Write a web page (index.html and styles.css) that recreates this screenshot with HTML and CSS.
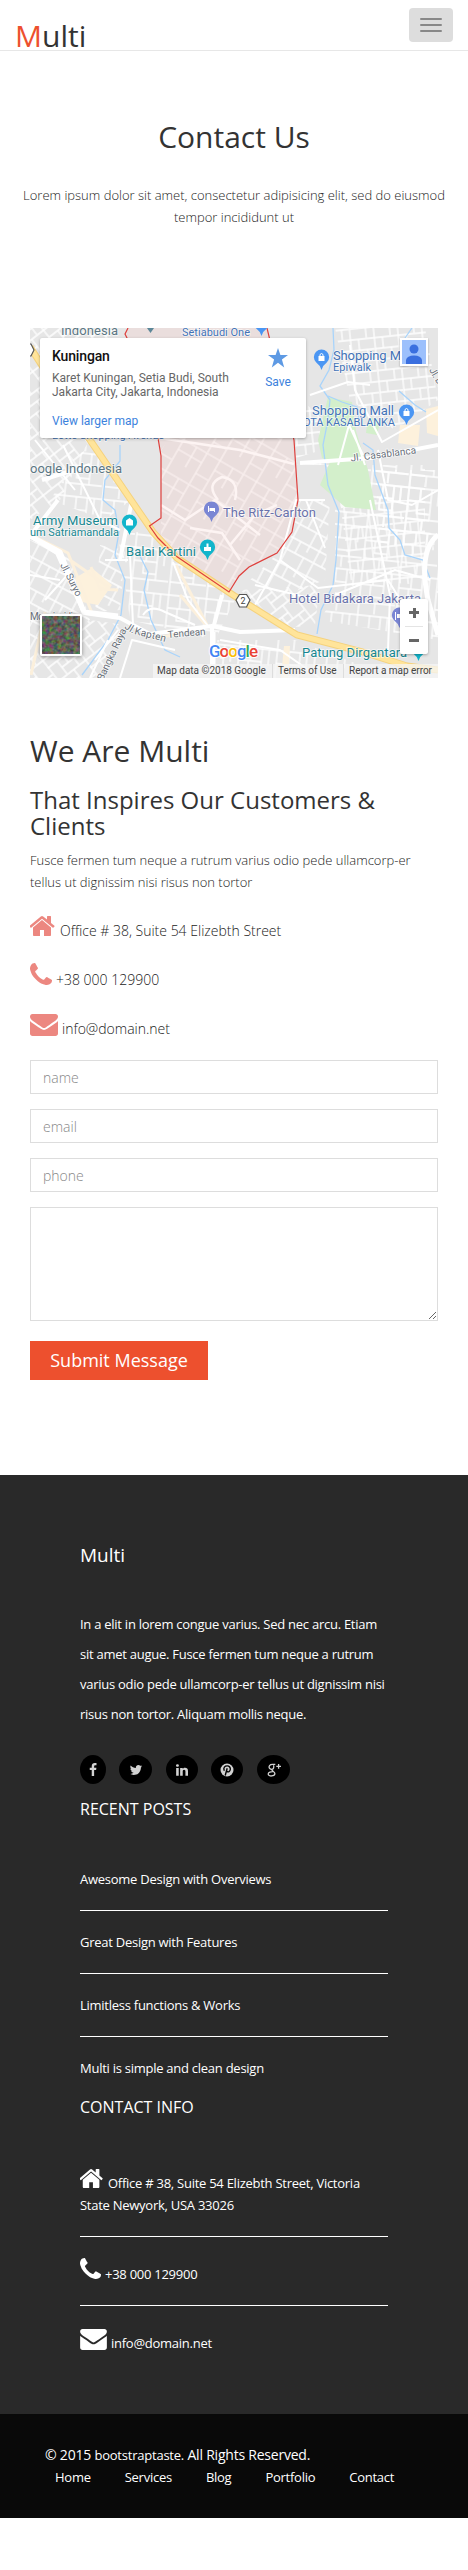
FILE: index.html
```html
<!DOCTYPE html>
<html lang="en">
<head>
<meta charset="utf-8">
<title>Multi - Contact Us</title>
<link rel="stylesheet" href="styles.css">
</head>
<body>
<svg class="sprite" aria-hidden="true">
  <symbol id="home" viewBox="64 253 1664 1283" preserveAspectRatio="none"><path d="M1408 992v480q0 26-19 45t-45 19h-384v-384h-256v384h-384q-26 0-45-19t-19-45v-480q0-1 .5-3t.5-3l575-474 575 474q1 2 1 6zm223-69l-62 74q-8 9-21 11h-3q-13 0-21-7l-692-577-692 577q-12 8-24 7-13-2-21-11l-62-74q-8-10-7-23.5t11-21.5l719-599q32-26 76-26t76 26l244 204v-195q0-14 9-23t23-9h192q14 0 23 9t9 23v408l219 182q10 8 11 21.5t-7 23.5z"/></symbol>
  <symbol id="phone" viewBox="192 128 1408 1408"><path d="M1600 1240q0 27-10 70.5t-21 68.5q-21 50-122 106-94 51-186 51-27 0-53-3.5t-57.5-12.5-47-14.5-55.5-20.5-49-18q-98-35-175-83-127-79-264-216t-216-264q-48-77-83-175-3-9-18-49t-20.5-55.5-14.5-47-12.5-57.5-3.5-53q0-92 51-186 56-101 106-122 25-11 68.5-21t70.5-10q14 0 21 3 18 6 53 76 11 19 30 54t35 63.5 31 53.5q3 4 17.5 25t21.5 35.5 7 28.5q0 20-28.5 50t-62 55-62 53-28.5 46q0 9 5 22.5t8.5 20.5 14 24 11.5 19q76 137 174 235t235 174q2 1 19 11.5t24 14 20.5 8.5 22.5 5q18 0 46-28.5t53-62 55-62 50-28.5q14 0 28.5 7t35.5 21.5 25 17.5q25 15 53.5 31t63.5 35 54 30q70 35 76 53 3 7 3 21z"/></symbol>
  <symbol id="mail" viewBox="0 256 1792 1408"><path d="M1792 710v794q0 66-47 113t-113 47h-1472q-66 0-113-47t-47-113v-794q44 49 101 87 362 246 497 345 57 42 92.5 65.5t94.5 48 110 24.5h2q51 0 110-24.5t94.5-48 92.5-65.5q170-123 498-345 57-39 100-87zm0-294q0 79-49 151t-122 123q-376 261-468 325-10 7-42.5 31t-54 38.5-52 32.5-57.5 27-50 9h-2q-23 0-50-9t-57.5-27-52-32.5-54-38.5-42.5-31q-91-64-262-182.5t-205-142.5q-62-42-117-115.5t-55-136.5q0-78 41.5-130t118.5-52h1472q65 0 112.5 47t47.5 113z"/></symbol>
  <symbol id="pin" viewBox="-8 -8 16 22"><path d="M0 12Q-1 8-5 5A7.300 7.300 0 1 1 5 5Q1 8 0 12z"/></symbol>
</svg>

<header class="topbar">
  <a class="logo"><span class="logo-first">M</span>ulti</a>
  <button class="toggle" type="button" aria-label="Menu"><i class="bar"></i><i class="bar"></i><i class="bar"></i></button>
</header>

<section class="intro">
  <h2 class="title">Contact Us</h2>
  <p class="lead">Lorem ipsum dolor sit amet, consectetur adipisicing elit, sed do eiusmod tempor incididunt ut</p>
</section>

<main class="main">
  <div class="map">
    <svg class="map-canvas" viewBox="30 328 408 350">
      <defs>
        <pattern id="g1" width="34" height="26" patternUnits="userSpaceOnUse" patternTransform="rotate(-38)"><path d="M0 1H34M1 0V26M0 10H20M12 10V26M20 1V18H34M12 18H20M27 18V26" class="street"/></pattern>
        <pattern id="g2" width="38" height="44" patternUnits="userSpaceOnUse" patternTransform="rotate(6)"><path d="M0 2H38M2 0V44M2 15H25M14 2V15M25 2V33H38M2 33H25M12 15V27H25M32 2V18M18 33V44" class="street"/></pattern>
        <pattern id="g3" width="30" height="28" patternUnits="userSpaceOnUse" patternTransform="rotate(28)"><path d="M0 1H30M1 0V28M10 1V14H30M1 14H10M20 14V28M20 1V8" class="street"/></pattern>
        <pattern id="g4" width="24" height="22" patternUnits="userSpaceOnUse" patternTransform="rotate(-6)"><path d="M0 1H24M1 0V22M9 1V12H24M1 12H9M17 12V22" class="street"/></pattern>
        <pattern id="g5" width="42" height="36" patternUnits="userSpaceOnUse" patternTransform="rotate(30)"><path d="M0 1H42M1 0V36M1 12H28M16 1V24M28 1V36M28 24H42" class="block"/></pattern>
      </defs>
      <path class="land" d="M30 328H438V678H30z"/>
      <path fill="url(#g1)" d="M30 328H115L90 440L60 500L30 520z"/>
      <path fill="url(#g2)" d="M90 440L131 500L105 520L50 500zM118 535L150 530L235 600L215 640L130 620z"/>
      <path fill="url(#g3)" d="M30 540L70 555L90 620L30 650zM100 545L125 550L120 610L95 612zM300 500L330 500L325 580L285 595L250 580L275 556L292 535z"/>
      <path fill="url(#g1)" d="M90 620L125 625L105 678H30V655zM240 590L320 585L315 625L285 628z"/>
      <path fill="url(#g4)" d="M335 328H425L438 400L395 430L350 400zM340 500L425 500L425 585L350 580zM295 395L325 420L322 450L296 458z"/>
      <path fill="url(#g2)" d="M296 465L325 460L335 500L335 595L320 620L438 640V570L425 500V465L330 465z"/>
      <path fill="url(#g2)" d="M215 640L295 640L360 665L300 678H225zM375 470H438V545H380z"/>
      <path class="cream" d="M75 578L92 568L112 585L98 605L82 602zM400 425L420 425L418 446L398 443zM426 409L438 406V436L427 433zM284 646L290 646L288 678H281z"/>
      <path class="cream-road" d="M31 535L68 553L92 613M70 560L110 588M91 567L100 589L118 590M180 595L205 624M31 675L45 612M155 638L180 634M176 565L207 625"/>
      <path class="green" d="M328 397L352 402L356 431L368 470L376 510L345 507L320 485L330 462L322 458L318 440z"/>
      <path class="green" d="M368 416L380 422L377 435L366 433z"/>
      <path class="road r3" d="M338 465L349 425L363 455M353 430L365 465"/>
      <path class="river" d="M333 328L334 350L329 370L320 386L330 400L328 420L323 445L328 485L339 512L336 560L333 585L321 610L317 634"/>
      <path class="river" d="M120 445V461L105 480L103 500L115 510L119 532L115 555L125 580L121 615L108 640L82 675M137 550L148 572L144 590L151 620L165 650L180 657"/>
      <path class="river" d="M363 443L373 450L375 475L388 510L389 528L400 540L405 555L423 560L430 578M399 391L415 405L426 412"/>
      <path class="river" d="M328 396L342 402L357 407L359 419M412 328L405 338"/>
      <path class="zone-fill" d="M128 328L125 334L128 340L158 438L161 456V518L149.500 526L158 538L176 556L229 592L239 576L249 567L277 553L292 532L298 500L294 440L267 328z"/>
      <path fill="url(#g5)" d="M170 438H294L298 500L292 532L277 553L249 567L229 590L161 540V450z"/>
      <path class="zone-road" d="M160 438L240 450L294 464M190 528L222 533L240 560M218 500Q205 484 222 477Q240 480 235 500M161 505L185 520L215 500L260 535M230 545L255 515L277 505"/>
      <path class="road r5" d="M300 463L370 458L438 445M58 500L30 536L57 553L84 613L120 618L150 634L212 626L240 632L295 630M222 595L214 625M212 625V678M132 500L120 560M42 480L90 465"/>
      <path class="road r7" d="M438 535Q418 550 428 600L438 635M213 632V678M30 536L60 552L84 612L118 616"/>
      <path class="road r3" d="M255 605L280 560L296 500L325 500M280 560L318 588L388 580L425 640M335 595L395 570L430 580M370 500L390 595L388 650M306 500L325 548M255 585L318 600M310 395L348 382L370 385M350 345L355 390L382 442L438 410M378 450L388 500L412 505L438 490M220 640L280 650L320 678"/>
      <path class="road r3" d="M173 562L188 600L208 626M130 555L133 625M105 560L128 560M143 615Q150 604 165 612L195 625M63 445L100 520L120 530M35 440L75 490M30 575L60 580M45 600L70 572M95 660L118 630M90 678L108 640M120 678L132 640L175 650"/>
      <path class="hwy-edge" d="M30 347L90 440L131 500L153 532L177 558L233 595L297 635L363 652L407 666L438 670"/>
      <path class="hwy" d="M30 347L90 440L131 500L153 532L177 558L233 595L297 635L363 652L407 666L438 670"/>
      <path class="zone-line" d="M128 328L125 334L128 340L158 438L161 456V518L149.500 526L158 538L176 556L229 592L239 576L249 567L277 553L292 532L298 500L294 440L267 328"/>
      <g class="shield"><path d="M236 600L239.500 594.500H246.500L250 600L246.500 607H239.500z"/><path d="M23 350L27 344H31L34 350L31 356H27z"/></g>
      <text class="t-num" x="240.500" y="604">2</text>

      <g class="t-place">
        <text x="61" y="335" textLength="57">Indonesia</text>
        <text x="30" y="473" textLength="92">oogle Indonesia</text>
      </g>
      <g class="t-shop">
        <text x="182" y="336" font-size="11" textLength="68">Setiabudi One</text>
        <text x="333" y="360" font-size="13" textLength="81">Shopping Mall</text>
        <text x="333" y="371" font-size="11" textLength="38">Epiwalk</text>
        <text x="312" y="415" font-size="13" textLength="82">Shopping Mall</text>
        <text x="303" y="426" font-size="11" textLength="92">OTA KASABLANKA</text>
        <text x="52" y="439" font-size="11" textLength="112">Lotte Shopping Avenue</text>
      </g>
      <g class="t-teal">
        <text x="33" y="525" font-size="13" textLength="85">Army Museum</text>
        <text x="30" y="536" font-size="11" textLength="89">um Satriamandala</text>
        <text x="126" y="555.500" font-size="13" textLength="70">Balai Kartini</text>
        <text x="302" y="657" font-size="13" textLength="105">Patung Dirgantara</text>
      </g>
      <g class="t-hotel">
        <text x="223" y="517" font-size="13" textLength="93">The Ritz-Carlton</text>
        <text x="289" y="602.500" font-size="13" textLength="132">Hotel Bidakara Jakarta</text>
      </g>
      <g class="t-road">
        <text transform="translate(351 461.500) rotate(-7)" textLength="66">Jl. Casablanca</text>
        <text transform="translate(60 565) rotate(63)" textLength="36">Jl. Suryo</text>
        <text transform="translate(124 628) rotate(32)">Jl.</text>
        <text transform="translate(134 634) rotate(14)" textLength="32">Kapten</text>
        <text transform="translate(168 638) rotate(-5)" textLength="38">Tendean</text>
        <text transform="translate(103 681) rotate(-65)" textLength="56">Bangka Raya</text>
        <text x="30" y="620" textLength="43">Monginsidi</text>
        <text transform="translate(429 370) rotate(60)" textLength="30">Jl. Dr. S</text>
      </g>
      <g>
        <use href="#pin" class="p-blue" x="313" y="349" width="17" height="23"/>
        <use href="#pin" class="p-blue" x="398" y="404" width="17" height="23"/>
        <use href="#pin" class="p-blue" x="253" y="315" width="17" height="23"/>
        <use href="#pin" class="p-teal" x="121" y="514" width="17" height="23"/>
        <use href="#pin" class="p-teal" x="199" y="539" width="17" height="23"/>
        <use href="#pin" class="p-teal" x="410" y="640" width="17" height="23"/>
        <use href="#pin" class="p-hotel" x="203" y="501" width="17" height="23"/>
        <use href="#pin" class="p-hotel" x="391" y="607" width="17" height="23"/>
        <path class="p-dark" d="M147 328H154L150.500 333z"/>
      </g>
      <g class="glyph">
        <path d="M318.500 356H324.500V361H318.500zM403.500 411H409.500V416H403.500z"/>
        <path d="M126 520.500L129.500 518L133 520.500V525.500H126zM204 547H211V551H204zM206.500 543.500H208.500V547H206.500z"/>
        <path d="M208 506H209V512H208zM209.500 508H215V512H214V511H209.500zM395 612H396V620H395zM397 614H404V619H403V618H397z"/>
      </g>
      <g class="glyph-line"><path d="M320 356V354.500Q321.500 352.500 323 354.500V356M405 411V409.500Q406.500 407.500 408 409.500V411"/></g>
      <text class="g-logo" x="209" y="657" textLength="49"><tspan class="gb">G</tspan><tspan class="gr">o</tspan><tspan class="gy">o</tspan><tspan class="gb">g</tspan><tspan class="gg">l</tspan><tspan class="gr">e</tspan></text>
    </svg>

    <div class="place-card">
      <div class="place-text">
        <strong class="place-name">Kuningan</strong>
        <span class="place-addr">Karet Kuningan, Setia Budi, South<br>Jakarta City, Jakarta, Indonesia</span>
        <a class="place-link">View larger map</a>
      </div>
      <div class="save">
        <svg class="star" viewBox="0 0 20 20"><path d="M10 0L12.400 7H20L13.900 11.600L16.200 19.500L10 14.700L3.800 19.500L6.100 11.600L0 7H7.600z"/></svg>
        <span class="save-label">Save</span>
      </div>
    </div>
    <svg class="avatar" viewBox="0 0 24 24"><path class="avatar-bg" d="M0 0H24V24H0z"/><circle cx="12" cy="9" r="4.500"/><path d="M4 24V20Q5 15.500 12 15.500T20 20V24z"/></svg>
    <svg class="satellite" viewBox="0 0 38 38">
      <defs><filter id="terrain" x="0" y="0" width="1" height="1" color-interpolation-filters="sRGB"><feTurbulence type="fractalNoise" baseFrequency=".25" numOctaves="3" seed="4"/><feColorMatrix values=".7 0 0 0 .03  0 .7 0 0 .04  0 0 .6 0 .05  0 0 0 0 1"/></filter></defs>
      <path class="sat-base" d="M0 0H38V38H0z"/><path class="sat-noise" d="M0 0H38V38H0z" filter="url(#terrain)"/>
    </svg>
    <div class="zoomer"><span class="plus"></span><span class="minus"></span></div>
    <div class="credits"><span class="c1">Map data ©2018 Google</span><span class="c2">Terms of Use</span><span class="c3">Report a map error</span></div>
  </div>

  <h2 class="title about-title">We Are Multi</h2>
  <h3 class="subtitle">That Inspires Our Customers &amp; Clients</h3>
  <p class="about">Fusce fermen tum neque a rutrum varius odio pede ullamcorp-er tellus ut dignissim nisi risus non tortor</p>
  <div class="reach">
    <p class="reach-row"><svg class="ico ico-home"><use href="#home"/></svg>Office # 38, Suite 54 Elizebth Street</p>
    <p class="reach-row"><svg class="ico ico-phone"><use href="#phone"/></svg>+38 000 129900</p>
    <p class="reach-row"><svg class="ico ico-mail"><use href="#mail"/></svg>info@domain.net</p>
  </div>
  <form class="form">
    <input class="field" type="text" placeholder="name">
    <input class="field" type="text" placeholder="email">
    <input class="field" type="text" placeholder="phone">
    <textarea class="field area"></textarea>
    <button class="submit" type="button">Submit Message</button>
  </form>
</main>

<footer class="footer">
  <h4 class="foot-brand">Multi</h4>
  <p class="foot-text">In a elit in lorem congue varius. Sed nec arcu. Etiam sit amet augue. Fusce fermen tum neque a rutrum varius odio pede ullamcorp-er tellus ut dignissim nisi risus non tortor. Aliquam mollis neque.</p>
  <div class="social">
    <a class="soc s1"><svg viewBox="0 0 1792 1792"><path d="M1343 12v264h-157q-86 0-116 36t-30 108v189h293l-39 296h-254v759h-306v-759h-255v-296h255v-218q0-186 104-288.500t277-102.500q147 0 228 12z"/></svg></a>
    <a class="soc s2"><svg viewBox="0 0 1792 1792"><path d="M1684 408q-67 98-162 167 1 14 1 42 0 130-38 259.500t-115.500 248.500-184.500 210.500-258 146-323 54.500q-271 0-496-145 35 4 78 4 225 0 401-138-105-2-188-64.500t-114-159.500q33 5 61 5 43 0 85-11-112-23-185.500-111.500t-73.500-205.500v-4q68 38 146 41-66-44-105-115t-39-154q0-88 44-163 121 149 294.500 238.500t371.500 99.500q-8-38-8-74 0-134 94.500-228.500t228.500-94.500q140 0 236 102 109-21 205-78-37 115-142 178 93-10 186-50z"/></svg></a>
    <a class="soc s3"><svg viewBox="0 0 1792 1792"><path d="M477 625v991h-330v-991h330zm21-306q1 73-50.500 122t-135.500 49h-2q-82 0-132-49t-50-122q0-74 51.500-122.500t134.500-48.500 133 48.500 51 122.500zm1166 729v568h-329v-530q0-105-40.500-164.500t-126.500-59.500q-63 0-105.500 34.500t-63.500 85.500q-11 30-11 81v553h-329q2-399 2-647t-1-296l-1-48h329v144h-2q20-32 41-56t56.500-52 87-43.500 114.500-15.500q171 0 275 113.500t104 332.500z"/></svg></a>
    <a class="soc s4"><svg viewBox="0 0 14 14"><circle cx="7" cy="7" r="6.500"/><path class="cut" d="M4.300 7.800C2.800 4.500 5 2.900 7.200 2.900S10.600 4.600 10.300 6.500S8.300 9.500 6.900 8.400M7.200 5.300L5.200 12.500"/></svg></a>
    <a class="soc s5"><svg viewBox="0 0 14 14"><path class="wire" d="M8.300 1.300H5.500C2.500 1.300 1.700 3.400 2.200 4.800S4.500 6.600 5.500 6.200S7.200 3.900 6.500 2.300M5 6.500C4.200 8 7.900 8.300 7.900 10.600C7.900 13.700 1.200 13.700 1.200 11C1.200 9.100 4 8.600 6 8.700M9.300 3.300H14M11.600 1V5.700"/></svg></a>
  </div>
  <h5 class="foot-head">RECENT POSTS</h5>
  <ul class="list">
    <li class="item">Awesome Design with Overviews</li>
    <li class="item">Great Design with Features</li>
    <li class="item">Limitless functions &amp; Works</li>
    <li class="item">Multi is simple and clean design</li>
  </ul>
  <h5 class="foot-head">CONTACT INFO</h5>
  <ul class="list contact-list">
    <li class="item"><svg class="ico ico-home"><use href="#home"/></svg>Office # 38, Suite 54 Elizebth Street, Victoria State Newyork, USA 33026</li>
    <li class="item"><svg class="ico ico-phone"><use href="#phone"/></svg>+38 000 129900</li>
    <li class="item"><svg class="ico ico-mail"><use href="#mail"/></svg>info@domain.net</li>
  </ul>
</footer>
<div class="bottom">
  <p class="copy">© 2015 <a class="copy-link">bootstraptaste.</a> All Rights Reserved.</p>
  <nav class="links"><a>Home</a><a>Services</a><a>Blog</a><a>Portfolio</a><a>Contact</a></nav>
</div>
</body>
</html>
```

FILE: styles.css
```css
* { box-sizing: border-box; }
body { margin: 0; background: #fff; color: #333; font-family: "Open Sans", sans-serif; font-size: 14px; font-weight: 300; }
h2, h3, h4, h5, p, ul { margin: 0; padding: 0; }
.sprite { position: absolute; width: 0; height: 0; }

.topbar { display: flex; justify-content: space-between; align-items: flex-start; height: 51px; padding: 8px 15px 0 15px; border-bottom: 1px solid #e7e7e7; }
.logo { padding: 11px 0 0; font-size: 30px; line-height: 33px; font-weight: 400; color: #333; }
.logo-first { color: #ed502e; }
.toggle { display: flex; flex-direction: column; align-items: center; justify-content: center; gap: 4px; width: 44px; height: 34px; padding: 0; border: 0; border-radius: 4px; background: #ddd; }
.bar { width: 22px; height: 2px; border-radius: 1px; background: #888; }

.intro { height: 277px; padding: 69px 15px 0; text-align: center; }
.title { font-size: 30px; line-height: 33px; font-weight: 400; }
.lead { margin-top: 31px; font-size: 13px; line-height: 22px; color: #1c1c1c; }

.main { padding: 0 30px 95px; }
.map { position: relative; width: 408px; height: 350px; overflow: hidden; font-family: Roboto, sans-serif; }
.map-canvas { display: block; width: 408px; height: 350px; font-family: Roboto, sans-serif; font-weight: 400; }
.land { fill: #e6e6e6; }
.street { fill: none; stroke: #fff; stroke-width: 1.300; }
.block { fill: none; stroke: #fdf4f3; stroke-width: 1.100; }
.cream { fill: #fdf1dc; }
.cream-road { fill: none; stroke: #fcf0dc; stroke-width: 3; }
.green { fill: #d3efcb; }
.river { fill: none; stroke: #a9d4fb; stroke-width: 1.300; }
.zone-fill { fill: #eadedd; }
.zone-road { fill: none; stroke: #fdf4f3; stroke-width: 2.500; }
.zone-line { fill: none; stroke: #de3f3c; stroke-width: 1.200; }
.road { fill: none; stroke: #fff; stroke-linejoin: round; }
.r3 { stroke-width: 2; }
.r5 { stroke-width: 4; }
.r7 { stroke-width: 5; }
.hwy-edge { fill: none; stroke: #f5d27d; stroke-width: 7; }
.hwy { fill: none; stroke: #ffe49a; stroke-width: 5; }
.shield path { fill: #fff; stroke: #555; stroke-width: 1.200; }
.map-canvas text { paint-order: stroke; stroke: #fff; stroke-opacity: .7; stroke-width: 1.500px; }
.t-num { font-size: 9px; fill: #444; }
.t-place { fill: #5b7683; font-size: 13px; }
.t-shop { fill: #4373b7; }
.t-teal { fill: #178791; }
.t-hotel { fill: #6a72ab; }
.t-road { fill: #69707a; font-size: 10px; }
.p-blue { fill: #4b96f3; }
.p-teal { fill: #12b5cb; }
.p-hotel { fill: #7a86d4; }
.p-dark { fill: #5c8798; }
.glyph { fill: #fff; }
.glyph-line { fill: none; stroke: #fff; }
.map-canvas .g-logo { font-size: 17px; font-weight: 500; stroke-opacity: 1; stroke-width: 2px; }
.gb { fill: #4285f4; }
.gr { fill: #ea4335; }
.gy { fill: #fbbc05; }
.gg { fill: #34a853; }

.place-card { position: absolute; left: 10px; top: 10px; display: flex; justify-content: space-between; width: 266px; height: 100px; padding: 10px 14px 0 12px; border-radius: 2px; background: #fff; box-shadow: 0 1px 3px rgba(0, 0, 0, .3); }
.place-text { display: flex; flex-direction: column; font-size: 12px; line-height: 14px; font-weight: 400; white-space: nowrap; }
.place-name { font-size: 14px; line-height: 16px; font-weight: 500; letter-spacing: -.15px; color: #111; }
.place-addr { margin-top: 7px; color: #666; }
.place-link { margin-top: 15px; color: #3c82dd; }
.save { display: flex; flex-direction: column; align-items: center; width: 28px; font-size: 12px; line-height: 14px; font-weight: 400; color: #3c82dd; }
.star { width: 20px; height: 20px; fill: #5e9ae4; }
.save-label { margin-top: 7px; }
.avatar { position: absolute; left: 370px; top: 10px; width: 28px; height: 28px; border: 2px solid #fff; box-shadow: 0 1px 2px rgba(0, 0, 0, .3); background: #fff; fill: #3a6fdf; }
.avatar-bg { fill: #9cc0fc; }
.satellite { position: absolute; left: 10px; top: 286px; width: 42px; height: 42px; border: 2px solid #fff; border-radius: 2px; box-shadow: 0 1px 4px rgba(0, 0, 0, .4); }
.sat-base { fill: #5c6158; }
.sat-noise { opacity: .8; }
.zoomer { position: absolute; left: 370px; top: 271px; display: flex; flex-direction: column; width: 28px; height: 55px; border-radius: 2px; background: #fff; box-shadow: 0 1px 3px rgba(0, 0, 0, .3); }
.plus, .minus { flex: 1; background: linear-gradient(#666, #666) center / 10px 3px no-repeat; }
.plus { margin: 0 5px; border-bottom: 1px solid #e4e4e4; background: linear-gradient(#666, #666) center / 10px 3px no-repeat, linear-gradient(#666, #666) center / 3px 10px no-repeat; }
.credits { position: absolute; right: 0; bottom: 0; display: flex; width: 285px; height: 14px; font-size: 10px; line-height: 14px; font-weight: 400; white-space: nowrap; color: #444; background: rgba(245, 245, 245, .75); }
.c1 { width: 120px; padding-left: 4px; border-right: 1px solid #ddd; }
.c2 { width: 71px; padding-left: 5px; border-right: 1px solid #ddd; letter-spacing: -.05px; }
.c3 { padding-left: 5px; letter-spacing: -.03px; }

.about-title { margin-top: 56px; }
.subtitle { margin-top: 20px; font-size: 24px; line-height: 26px; font-weight: 400; }
.about { margin-top: 10px; font-size: 13px; line-height: 22px; color: #1c1c1c; }
.reach { margin-top: 13px; }
.reach-row { height: 49px; line-height: 49px; color: #222; }
.ico { display: inline-block; margin: -10px 4px 0 0; vertical-align: baseline; fill: #ec8780; }
.ico-home { width: 26px; height: 20px; }
.ico-phone { width: 22px; height: 22px; }
.ico-mail { width: 28px; height: 22px; vertical-align: -2px; }
.form { display: flex; flex-direction: column; align-items: flex-start; gap: 15px; margin-top: 7px; }
.field { display: block; width: 408px; height: 34px; margin: 0; padding: 6px 12px; border: 1px solid #ddd; border-radius: 0; background: #fff; outline: 0; font: 300 14px/20px "Open Sans", sans-serif; color: #555; }
.field::placeholder { color: #888; opacity: 1; }
.area { height: 114px; resize: vertical; }
.submit { width: 178px; height: 39px; margin-top: 5px; padding: 0; border: 0; background: #ed502e; color: #fff; font: 500 18px/25px "Open Sans", sans-serif; }

.footer { height: 939px; padding: 70px 80px 0; background: #292929; color: #fff; font-size: 13px; font-weight: 400; line-height: 22px; letter-spacing: -.26px; }
.foot-brand { height: 25px; font-size: 19px; line-height: 21px; font-weight: 500; letter-spacing: 0; }
.foot-text { margin-top: 39px; line-height: 30px; }
.social { display: flex; margin-top: 26px; height: 29px; }
.soc { display: flex; align-items: center; justify-content: center; height: 29px; border-radius: 50%; background: #000; fill: #d2d2d2; }
.soc svg { width: 14px; height: 14px; }
.s1 { width: 26px; margin-right: 13px; }
.s2 { width: 33px; margin-right: 14px; }
.s3 { width: 32px; margin-right: 13px; }
.s4 { width: 32px; margin-right: 14px; }
.s5 { width: 33px; }
.cut { fill: none; stroke: #000; stroke-width: 1.400; }
.wire { fill: none; stroke: #d2d2d2; stroke-width: 1.300; }
.foot-head { margin-top: 16px; font-size: 16px; line-height: 18px; font-weight: 500; letter-spacing: 0; }
.list { margin: 50px 0 19px; list-style: none; }
.item { padding-bottom: 20px; margin-bottom: 20px; border-bottom: 1px solid #fff; }
.item:last-child { padding: 0; margin: 0; border: 0; }
.contact-list .item, .contact-list .item:last-child { padding-top: 6px; }
.contact-list .ico { fill: #fff; }
.contact-list .ico-home { width: 24px; height: 19px; }
.contact-list .ico-phone { width: 21px; height: 21px; }
.contact-list .ico-mail { width: 27px; height: 21px; }

.bottom { height: 104px; padding: 30px 45px 0; background: #090909; color: #fff; font-weight: 400; line-height: 22px; letter-spacing: -.22px; }
.copy-link { font-size: 13px; }
.links { display: flex; gap: 34px; padding-left: 10px; font-size: 13px; letter-spacing: -.26px; }
```
